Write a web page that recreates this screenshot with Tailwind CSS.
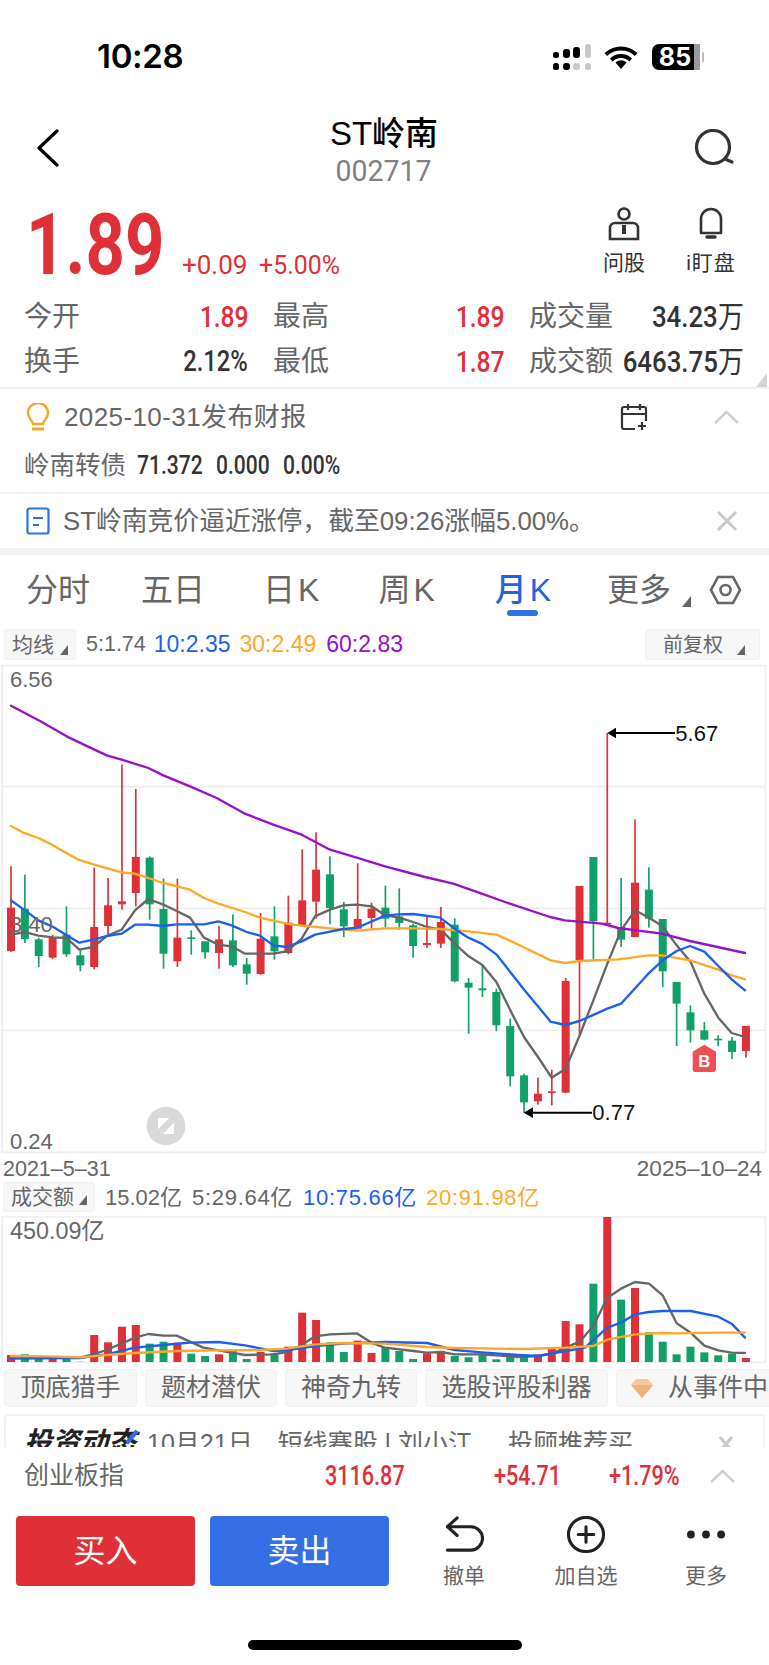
<!DOCTYPE html>
<html lang="zh-CN">
<head>
    <meta charset="UTF-8" />
    <title>ST岭南</title>
    <script src="https://cdn.jsdelivr.net/npm/@tailwindcss/browser@4"></script>
</head>
<body class="bg-white">
<div class="w-[769px] h-[1665px] overflow-hidden bg-white text-[#666666] font-['Liberation_Sans','Noto_Sans_CJK_SC',sans-serif]">

    <!-- Status bar -->
    <div class="h-[114px] flex items-center">
        <span class="ml-[97px] text-[33px] font-semibold text-black font-['Inter',sans-serif] tracking-[-0.3px]">10:28</span>
        <svg class="ml-auto mr-[65px]" width="152" height="28" viewBox="552 43 152 28">
            <g fill="#000">
                <rect x="553" y="52" width="6" height="6" rx="2.5"/><rect x="563" y="49" width="7" height="9" rx="3"/><rect x="573" y="47" width="7" height="11" rx="3"/>
                <rect x="553" y="63" width="6" height="7" rx="2.5"/><rect x="563" y="63" width="7" height="7" rx="3"/>
            </g>
            <g fill="#c8c8c8">
                <rect x="585" y="44" width="6" height="14" rx="2.5"/><rect x="573" y="63" width="7" height="7" rx="3"/><rect x="585" y="63" width="6" height="7" rx="2.5"/>
            </g>
            <path d="M621 69l-5.500-6.500a8 8 0 0 1 11 0zM610 58.500a16 16 0 0 1 22 0l-2.500 3a12 12 0 0 0-17 0zM604.500 53a24 24 0 0 1 33 0l-2.600 3a20 20 0 0 0-27.800 0z" fill="#000"/>
            <rect x="652" y="44" width="48" height="26" rx="7" fill="#000"/>
            <rect x="694" y="44" width="6" height="26" fill="#9a9a9a"/>
            <path d="M702 52a4 5 0 0 1 0 10z" fill="#bbb"/>
            <text x="675" y="65.500" text-anchor="middle" font-size="25" font-weight="700" font-family="Inter" fill="#fff">85</text>
        </svg>
    </div>

    <!-- Header -->
    <header class="h-[74px] grid grid-cols-[1fr_auto_1fr] items-center pl-[36px] pr-[34px]">
        <svg class="mb-[6px] justify-self-start" width="24" height="38" viewBox="0 0 24 38" fill="none" stroke="#000" stroke-width="3.200" stroke-linecap="round" stroke-linejoin="round"><path d="M21 2L3 19l18 17"/></svg>
        <div class="flex flex-col items-center mr-[3px]">
            <div class="h-[40px] leading-[40px] text-[33px] font-medium text-black">ST岭南</div>
            <div class="h-[34px] leading-[34px] text-[30px] text-[#808080] font-['Roboto',sans-serif] inline-block scale-x-[.95]">002717</div>
        </div>
        <svg class="mb-[6px] justify-self-end" width="42" height="38" viewBox="0 0 42 38" fill="none" stroke="#333" stroke-width="3.200" stroke-linecap="round"><circle cx="20" cy="18" r="16.500"/><path d="M32 30l7 3"/></svg>
    </header>

    <!-- Price -->
    <section class="h-[104px] relative flex items-end pl-[26px] pb-[16px]">
        <span class="w-[156px] text-[86px] leading-[84px] font-bold text-[#e03037] font-['Roboto',sans-serif] inline-block origin-left scale-x-[.8] -mb-[11px]">1.89</span>
        <span class="text-[#e03037] text-[26px] leading-[28px] font-['Roboto',sans-serif] inline-block -mb-[3px]">+0.09</span>
        <span class="ml-[12px] text-[#e03037] text-[26px] leading-[28px] font-['Roboto',sans-serif] inline-block origin-left scale-x-[.96] -mb-[3px]">+5.00%</span>
        <div class="ml-auto mr-[33px] mb-[-2px] flex">
            <div class="w-[42px] flex flex-col items-center">
                <svg width="34" height="34" viewBox="0 0 34 34" fill="none" stroke="#333" stroke-width="2.600"><circle cx="17" cy="7" r="5.500"/><path d="M3 32V21a5 5 0 0 1 5-5h18a5 5 0 0 1 5 5v11z"/><path d="M17 18v9" stroke-width="4"/></svg>
                <span class="mt-[7px] text-[21px] leading-[30px] text-[#333] whitespace-nowrap">问股</span>
            </div>
            <div class="w-[50px] ml-[41px] flex flex-col items-center">
                <svg width="28" height="34" viewBox="0 0 28 34" fill="none" stroke="#333" stroke-width="2.600" stroke-linejoin="round"><path d="M14 2a10 10 0 0 1 10 10v14H4V12A10 10 0 0 1 14 2z"/><path d="M10 30h8" stroke-width="3.400" stroke-linecap="round"/></svg>
                <span class="mt-[7px] text-[21px] leading-[30px] text-[#333] whitespace-nowrap tracking-[1px]">i盯盘</span>
            </div>
        </div>
    </section>

    <!-- Quote table -->
    <section class="relative h-[95px] pl-[24px] pt-[2px]">
        <div class="grid grid-cols-[224px_231px_215px] gap-x-[25px] h-[45px] items-center text-[28px]">
            <div class="flex justify-between items-center"><span>今开</span><span class="text-[#e03037] font-['Roboto',sans-serif] font-medium text-[30px] inline-block origin-right scale-x-[.82]">1.89</span></div>
            <div class="flex justify-between items-center"><span>最高</span><span class="text-[#e03037] font-['Roboto',sans-serif] font-medium text-[30px] inline-block origin-right scale-x-[.82]">1.89</span></div>
            <div class="flex justify-between items-center"><span class="whitespace-nowrap">成交量</span><span class="text-[#333] font-['Roboto',sans-serif] font-medium text-[30px] inline-block origin-right scale-x-[.86] whitespace-nowrap">34.23万</span></div>
        </div>
        <div class="grid grid-cols-[224px_231px_215px] gap-x-[25px] h-[45px] items-center text-[28px]">
            <div class="flex justify-between items-center"><span>换手</span><span class="text-[#333] font-['Roboto',sans-serif] font-medium text-[29px] inline-block origin-right scale-x-[.82]">2.12%</span></div>
            <div class="flex justify-between items-center"><span>最低</span><span class="text-[#e03037] font-['Roboto',sans-serif] font-medium text-[30px] inline-block origin-right scale-x-[.82]">1.87</span></div>
            <div class="flex justify-between items-center"><span class="whitespace-nowrap shrink-0">成交额</span><span class="-ml-[40px] shrink-0 text-[#333] font-['Roboto',sans-serif] font-medium text-[30px] inline-block origin-right scale-x-[.86] whitespace-nowrap">6463.75万</span></div>
        </div>
        <svg class="absolute right-[2px] top-[81px]" width="11" height="14" viewBox="0 0 11 14"><path d="M11 0v14H0z" fill="#d4d4d4"/></svg>
    </section>

    <!-- Earnings notice -->
    <section class="border-t-2 border-[#f2f2f2] h-[105px]">
        <div class="h-[56px] flex items-center pl-[26px] pr-[30px]">
            <svg width="24" height="28" viewBox="0 0 24 28" fill="none" stroke="#f5a623" stroke-width="2.400"><path d="M7 21c0-3-5-5-5-11a10 10 0 0 1 20 0c0 6-5 8-5 11z"/><path d="M6 26h12" stroke-width="3"/></svg>
            <span class="ml-[14px] text-[26px] tracking-[0.4px]">2025-10-31发布财报</span>
            <svg class="ml-auto" width="28" height="28" viewBox="0 0 28 28" fill="none" stroke="#333" stroke-width="2.200"><path d="M15 26H4a2 2 0 0 1-2-2V6a2 2 0 0 1 2-2h20a2 2 0 0 1 2 2v12M2 11h24M8 1v6M20 1v6M22 19v8M18 23h8"/></svg>
            <svg class="ml-[66px]" width="25" height="14" viewBox="0 0 25 14" fill="none" stroke="#d0d0d0" stroke-width="2.600"><path d="M1 13L12.500 2 24 13"/></svg>
        </div>
        <div class="h-[40px] flex items-center pl-[24px]">
            <span class="text-[25.500px]">岭南转债</span>
            <span class="ml-[11px] w-[79px] text-[#333] font-['Roboto',sans-serif] font-medium text-[26px] inline-block origin-left scale-x-[.81]">71.372</span>
            <span class="w-[67px] text-[#333] font-['Roboto',sans-serif] font-medium text-[26px] inline-block origin-left scale-x-[.81]">0.000</span>
            <span class="text-[#333] font-['Roboto',sans-serif] font-medium text-[26px] inline-block origin-left scale-x-[.81]">0.00%</span>
        </div>
    </section>

    <!-- News line -->
    <section class="border-t-2 border-[#f2f2f2] h-[56px] flex items-center pl-[26px] pr-[31px]">
        <svg width="24" height="28" viewBox="0 0 24 28" fill="none" stroke="#2f6fe4" stroke-width="2.200"><rect x="1.500" y="1.500" width="21" height="25" rx="2"/><path d="M7 11h10M7 18h6"/></svg>
        <span class="ml-[13px] text-[25.800px] whitespace-nowrap">ST岭南竞价逼近涨停，截至09:26涨幅5.00%。</span>
        <svg class="ml-auto" width="22" height="22" viewBox="0 0 22 22" fill="none" stroke="#c9c9c9" stroke-width="3"><path d="M2 2l18 18M20 2L2 20"/></svg>
    </section>
    <div class="h-[7px] bg-[#f2f2f2]"></div>

    <!-- Period tabs -->
    <nav class="h-[70px] flex items-center text-[32px] relative">
        <span class="ml-[26px]">分时</span>
        <span class="ml-[51px]">五日</span>
        <span class="ml-[58px]">日<span class="ml-[3px]">K</span></span>
        <span class="ml-[59px]">周<span class="ml-[3px]">K</span></span>
        <span class="ml-[60px] text-[#2563d9] font-medium relative">月<span class="ml-[3px]">K</span><span class="absolute left-[12px] top-[44px] w-[31px] h-[6px] rounded-full bg-[#3370e6]"></span></span>
        <span class="ml-[56px]">更多</span>
        <svg class="ml-[11px] mt-[22px]" width="9" height="11" viewBox="0 0 9 11"><path d="M9 0v11H0z" fill="#666"/></svg>
        <svg class="ml-[18px]" width="33" height="30" viewBox="0 0 33 30" fill="none" stroke="#666" stroke-width="2.600"><path d="M9 2h15l7 13-7 13H9L2 15z"/><circle cx="16.500" cy="15" r="5"/></svg>
    </nav>

    <!-- MA toolbar -->
    <div class="mt-[4px] h-[31px] flex items-center pl-[4px] pr-[9px] whitespace-nowrap">
        <div class="w-[72px] h-[31px] flex items-center justify-between px-[7px] bg-[#f7f7f7] rounded-[3px] border border-[#f0f0f0] text-[21px]"><span>均线</span><svg class="mt-[10px]" width="8" height="10" viewBox="0 0 8 10"><path d="M8 0v10H0z" fill="#666"/></svg></div>
        <span class="ml-[10px] text-[21.500px]">5:1.74</span>
        <span class="ml-[8px] text-[23px] text-[#1a5ff0]">10:2.35</span>
        <span class="ml-[9px] text-[23px] text-[#ffa726]">30:2.49</span>
        <span class="ml-[10px] text-[23px] text-[#9611c7]">60:2.83</span>
        <div class="ml-auto w-[115px] h-[31px] flex items-center pl-[17px] bg-[#f7f7f7] rounded-[3px] border border-[#f0f0f0] text-[20px]"><span>前复权</span><svg class="ml-[14px] mt-[10px]" width="8" height="10" viewBox="0 0 8 10"><path d="M8 0v10H0z" fill="#666"/></svg></div>
    </div>

    <!-- K line chart, numbers are 3x page pixels -->
    <svg id="kline" class="block mt-[5px] overflow-visible" width="769" height="488" viewBox="0 14 2307 1464"></svg>

    <div class="h-[29px] pt-[3px] flex justify-between items-center pl-[3px] pr-[7px] text-[21.500px] leading-[26px]">
        <span>2021–5–31</span><span class="text-[22.500px]">2025–10–24</span>
    </div>

    <!-- Volume toolbar -->
    <div class="h-[30px] flex items-center pl-[3px] text-[22px] whitespace-nowrap">
        <div class="w-[92px] h-[30px] flex items-center justify-between px-[7px] bg-[#f7f7f7] rounded-[3px] border border-[#f0f0f0] text-[21px]"><span>成交额</span><svg class="mt-[6px]" width="8" height="10" viewBox="0 0 8 10"><path d="M8 0v10H0z" fill="#666"/></svg></div>
        <span class="ml-[10px]">15.02亿</span>
        <span class="ml-[10px] tracking-[.7px]">5:29.64亿</span>
        <span class="ml-[10px] tracking-[.7px] text-[#1a5ff0]">10:75.66亿</span>
        <span class="ml-[9px] tracking-[.7px] text-[#ffa726]">20:91.98亿</span>
    </div>

    <!-- Volume chart -->
    <svg id="volume" class="block mt-[4px]" width="769" height="147" viewBox="0 195 2307 441"></svg>

    <!-- Shortcut chips -->
    <div class="mt-[6px] h-[38px] flex gap-[8px] pl-[4px] text-[25px] whitespace-nowrap overflow-hidden">
        <div class="w-[133px] shrink-0 flex items-center justify-center bg-[#f7f7f7] rounded-[4px] border border-[#f0f0f0]">顶底猎手</div>
        <div class="w-[132px] shrink-0 flex items-center justify-center bg-[#f7f7f7] rounded-[4px] border border-[#f0f0f0]">题材潜伏</div>
        <div class="w-[132px] shrink-0 flex items-center justify-center bg-[#f7f7f7] rounded-[4px] border border-[#f0f0f0]">神奇九转</div>
        <div class="w-[183px] shrink-0 flex items-center justify-center bg-[#f7f7f7] rounded-[4px] border border-[#f0f0f0]">选股评股利器</div>
        <div class="w-[170px] shrink-0 flex items-center pl-[14px] bg-[#f7f7f7] rounded-[4px] border border-[#f0f0f0]">
            <svg width="22" height="20" viewBox="0 0 22 20"><path d="M5 1h12l5 6-11 13L0 7z" fill="#f3c99b"/><path d="M0 7h22L11 20z" fill="#eeb27a"/></svg>
            <span class="ml-[15px]">从事件中</span>
        </div>
    </div>

    <!-- News card, cut off by the index bar -->
    <div class="mt-[7px] mx-[4px] h-[33px] overflow-hidden">
        <div class="h-[50px] flex items-start pt-[10px] pl-[18px] border-2 border-[#f2f2f2] rounded-[4px] text-[25px] leading-[34px] whitespace-nowrap">
            <span class="relative font-bold italic text-[#222] text-[28px]">投资动态<span class="absolute right-[2px] top-[3px] w-[4px] h-[16px] bg-[#2f6fe4] rotate-[40deg]"></span></span>
            <span class="ml-[11px]">10月21日</span>
            <span class="ml-[25px]">短线赛股 | 刘小江</span>
            <span class="ml-[35px]">投顾推荐买</span>
            <svg class="ml-auto mr-[30px] mt-[10px]" width="14" height="20" viewBox="0 0 14 20" fill="none" stroke="#c9c9c9" stroke-width="3"><path d="M1 1l12 14M13 1L1 15"/></svg>
        </div>
    </div>

    <!-- Index bar -->
    <div class="h-[58px] flex items-center pl-[24px] bg-white">
        <span class="w-[301px] text-[25px]">创业板指</span>
        <span class="w-[169px] text-[#e03037] font-['Roboto',sans-serif] font-medium text-[27px] inline-block origin-left scale-x-[.8]">3116.87</span>
        <span class="w-[115px] text-[#e03037] font-['Roboto',sans-serif] font-medium text-[27px] inline-block origin-left scale-x-[.8]">+54.71</span>
        <span class="w-[106px] text-[#e03037] font-['Roboto',sans-serif] font-medium text-[27px] inline-block origin-left scale-x-[.8]">+1.79%</span>
        <svg class="-ml-[5px]" width="25" height="14" viewBox="0 0 25 14" fill="none" stroke="#d0d0d0" stroke-width="2.600"><path d="M1 13L12.500 2 24 13"/></svg>
    </div>

    <!-- Actions -->
    <div class="mt-[11px] h-[75px] flex pl-[16px]">
        <button class="w-[179px] h-[70px] bg-[#e03037] text-white text-[32px] rounded-[4px]">买入</button>
        <button class="ml-[15px] w-[179px] h-[70px] bg-[#346fe6] text-white text-[32px] rounded-[4px]">卖出</button>
        <div class="ml-[16px] w-[118px] flex flex-col items-center">
            <svg width="40" height="38" viewBox="0 0 40 38" fill="none" stroke="#222" stroke-width="3.200" stroke-linecap="round" stroke-linejoin="round"><path d="M3 11h24a10 10 0 0 1 0 24H3"/><path d="M13 2L3 11l10 9"/></svg>
            <span class="mt-[8px] text-[21px] leading-[30px]">撤单</span>
        </div>
        <div class="w-[126px] flex flex-col items-center">
            <svg width="40" height="38" viewBox="0 0 40 38" fill="none" stroke="#222" stroke-width="3.200"><ellipse cx="20" cy="19" rx="18" ry="17.500"/><path d="M20 11v16M12 19h16" stroke-linecap="round"/></svg>
            <span class="mt-[8px] text-[21px] leading-[30px]">加自选</span>
        </div>
        <div class="w-[114px] flex flex-col items-center">
            <svg width="40" height="38" viewBox="0 0 40 38" fill="#222"><circle cx="4.500" cy="19" r="4"/><circle cx="20" cy="19" r="4"/><circle cx="35.500" cy="19" r="4"/></svg>
            <span class="mt-[8px] text-[21px] leading-[30px]">更多</span>
        </div>
    </div>

    <div class="mt-[49px] mx-auto w-[274px] h-[10px] rounded-full bg-black"></div>
</div>

<script>
    const RED = "#e03037", GREEN = "#11a068";

    // [wick top, body top, body bottom, wick bottom, up?]
    const CANDLES = [
        [618,742,872,875,1],[643,745,836,848,0],[832,837,887,920,0],[823,830,892,896,1],[738,823,882,890,0],
        [870,885,915,933,0],[622,800,920,927,1],[653,735,797,830,1],[312,723,732,748,1],[386,590,698,738,1],
        [588,592,732,778,0],[655,746,880,925,0],[655,832,903,920,1],[810,831,836,883,0],[843,843,876,895,0],
        [797,837,878,925,1],[762,840,915,920,0],[893,912,940,973,0],[758,835,941,943,1],[738,828,873,898,0],
        [706,787,878,882,1],[567,720,795,798,1],[516,628,724,775,1],[588,642,743,792,0],[725,747,798,830,0],
        [609,776,805,805,1],[727,745,773,805,1],[676,742,775,800,0],[684,768,788,808,0],[790,795,857,892,0],
        [770,848,854,863,1],[740,785,850,863,1],[774,793,963,966,0],[953,967,982,1120,0],[915,984,990,1010,0],
        [985,995,1095,1112,0],[1075,1097,1248,1278,0],[1240,1245,1326,1357,0],[1252,1300,1323,1333,1],[1228,1293,1298,1335,1],
        [953,962,1297,1298,1],[677,677,900,1128,1],[590,590,783,897,0],[218,787,792,793,1],[653,800,838,860,0],
        [477,667,830,830,1],[621,688,775,802,0],[776,776,933,980,0],[965,965,1030,1157,0],[1035,1056,1110,1147,0],
        [1085,1110,1138,1140,0],[1125,1135,1140,1158,0],[1130,1141,1175,1196,0],[1097,1097,1172,1192,1]
    ];
    // bar tops in the volume panel, baseline 633
    const VOLUME = [612,610,622,623,620,630,552,574,527,522,578,572,575,608,615,610,600,624,603,607,587,485,507,574,603,569,606,590,600,624,607,600,615,619,608,625,617,618,610,590,510,520,398,198,446,411,544,572,610,587,604,613,608,621];

    const MA_KLINE = [
        ["#666666","33,823 75,815 115,826 160,831 200,833 238,868 280,860 320,827 365,808 405,750 445,716 490,733 530,752 570,772 612,832 655,853 695,858 735,880 820,880 860,873 905,835 945,768 990,748 1030,735 1070,733 1115,738 1155,765 1197,772 1240,785 1281,800 1323,808 1364,850 1406,888 1447,914 1489,965 1531,1050 1572,1130 1614,1190 1655,1252 1697,1225 1739,1125 1780,1020 1822,910 1863,810 1905,750 1947,772 1988,798 2030,855 2072,905 2113,1000 2155,1072 2195,1118 2235,1130"],
        ["#ffa726","33,497 70,517 115,533 150,550 235,598 280,612 365,636 405,640 490,668 570,688 612,713 655,730 735,755 780,772 860,790 905,796 1030,808 1070,811 1155,804 1240,804 1320,806 1405,813 1490,823 1570,860 1652,900 1695,908 1739,902 1855,897 1945,885 1988,885 2070,900 2155,928 2195,945 2235,957"],
        ["#1a5ff0","33,720 75,750 115,780 160,800 200,825 238,847 280,838 320,827 365,820 405,793 445,793 490,797 530,792 612,792 655,783 695,795 740,815 780,826 820,855 860,860 905,843 945,823 1030,806 1070,803 1155,766 1195,762 1240,761 1320,772 1364,805 1405,832 1445,850 1489,882 1570,985 1652,1084 1695,1094 1739,1082 1822,1045 1863,1030 1945,940 1988,900 2030,872 2070,857 2113,874 2155,917 2195,957 2235,990"],
        ["#9611c7","33,136 120,182 200,228 250,252 320,285 365,298 445,323 490,345 570,378 650,413 735,460 820,493 905,523 990,568 1080,595 1155,618 1275,650 1360,670 1445,700 1515,725 1650,770 1695,780 1805,790 1855,803 1985,820 2070,842 2235,878"]
    ];
    const MA_VOLUME = [
        ["#666666","33,622 240,620 280,610 320,597 405,560 445,549 490,554 530,554 610,590 655,598 735,612 820,610 860,603 905,582 945,556 990,550 1070,547 1120,578 1155,590 1240,600 1281,605 1323,603 1364,610 1445,610 1555,618 1614,615 1655,608 1697,590 1739,572 1780,525 1822,440 1863,413 1905,393 1947,398 1988,433 2030,517 2072,545 2113,584 2155,598 2195,605 2235,606"],
        ["#1a5ff0","33,622 240,621 280,615 320,610 405,590 490,582 570,575 655,573 735,583 820,600 860,598 945,585 1030,578 1155,573 1281,576 1364,597 1445,604 1555,612 1614,615 1697,600 1755,590 1822,530 1863,515 1905,490 1947,483 1988,480 2072,480 2155,497 2195,518 2235,560"],
        ["#ffa726","33,615 150,616 240,619 320,612 405,606 530,600 655,598 780,597 860,593 945,580 1030,576 1155,578 1280,588 1364,591 1572,594 1697,590 1780,585 1822,566 1905,550 1988,546 2030,547 2155,545 2235,545"]
    ];

    const cx = i => 33 + 41.6 * i;
    const line = ([color, pts]) => `<polyline points="${pts}" fill="none" stroke="${color}" stroke-width="7" stroke-linejoin="round" stroke-linecap="round"/>`;
    const label = (x, y, text, fill = "#666666", size = 66) => `<text x="${x}" y="${y}" font-size="${size}" font-family="Liberation Sans, Noto Sans CJK SC, sans-serif" fill="${fill}">${text}</text>`;

    let kline = `<path d="M6 16H2296V1476H6z" fill="none" stroke="#eeeeee" stroke-width="5"/>`;
    [379, 744, 1110].forEach(y => { kline += `<path d="M6 ${y}H2296" stroke="#eeeeee" stroke-width="5"/>`; });
    CANDLES.forEach(([wt, bt, bb, wb, up], i) => {
        const color = up ? RED : GREEN, x = cx(i);
        kline += `<rect x="${x - 2.5}" y="${wt}" width="5" height="${wb - wt}" fill="${color}"/>`;
        kline += `<rect x="${x - 12}" y="${bt}" width="24" height="${Math.max(bb - bt, 5)}" fill="${color}"/>`;
    });
    kline += MA_KLINE.map(line).join("");
    kline += label(30, 80, "6.56") + label(30, 815, "3.40") + label(30, 1467, "0.24");
    kline += `<path d="M1845 218H2025" stroke="#000" stroke-width="6"/><path d="M1822 218l26-16v32z" fill="#000"/>` + label(2026, 241, "5.67", "#111");
    kline += `<path d="M1595 1357H1776" stroke="#000" stroke-width="6"/><path d="M1571 1357l28-16v32z" fill="#000"/>` + label(1777, 1380, "0.77", "#111");
    // full screen button
    kline += `<circle cx="498" cy="1397" r="58" fill="#d9d9d9"/><path d="M474 1373h34l-34 34zM522 1421h-34l34-34z" fill="#fff"/>`;
    // B marker
    kline += `<path d="M2113 1153l35 21v51a10 10 0 0 1-10 10h-50a10 10 0 0 1-10-10v-51z" fill="#ee4f55"/>`;
    kline += `<text x="2113" y="1221" text-anchor="middle" font-size="50" font-weight="700" font-family="Liberation Sans" fill="#fff">B</text>`;
    document.getElementById("kline").innerHTML = kline;

    let volume = `<path d="M6 635V198H2296V635" fill="none" stroke="#eeeeee" stroke-width="5"/><path d="M6 634H2296" stroke="#e8e8e8" stroke-width="3"/>`;
    VOLUME.forEach((top, i) => {
        const up = CANDLES[i][4];
        const fill = i === 5 ? "#bfe6d6" : (up ? RED : GREEN);
        volume += `<rect x="${cx(i) - 12}" y="${top}" width="24" height="${633 - top}" fill="${fill}"/>`;
    });
    volume += MA_VOLUME.map(line).join("");
    volume += label(30, 265, "450.09亿", "#666666", 70);
    document.getElementById("volume").innerHTML = volume;
</script>
</body>
</html>
